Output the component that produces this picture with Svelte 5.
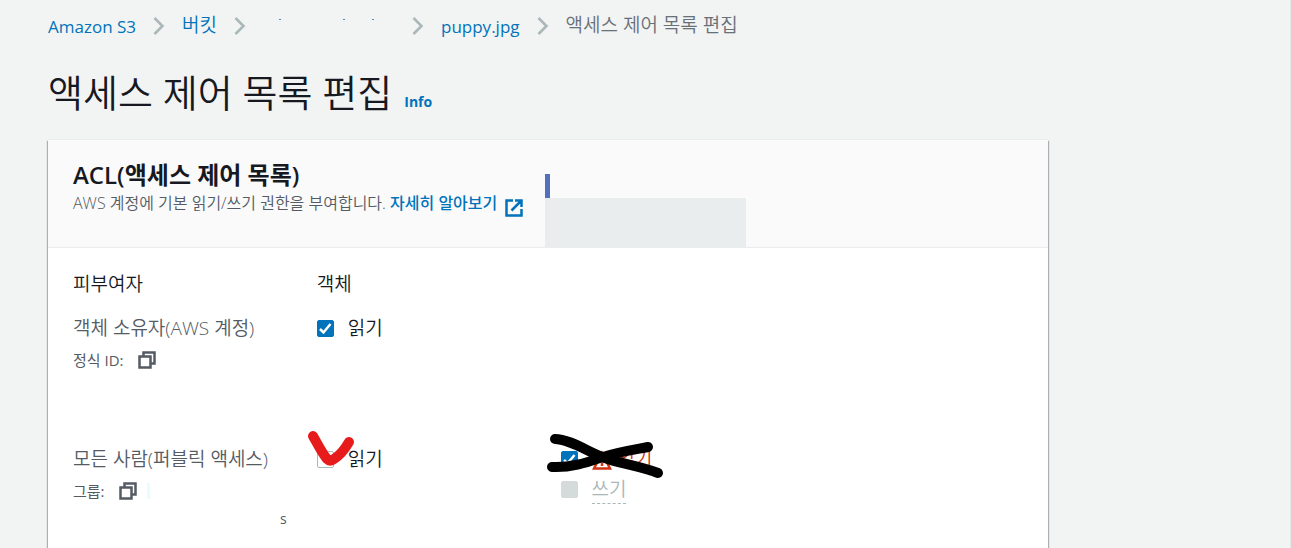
<script lang="ts">
	const title = '액세스 제어 목록 편집';

	let ownerRead = $state(true);
	let publicRead = $state(false);
	let publicAclRead = $state(true);
</script>

{#snippet chevron()}
	<svg class="chevron" viewBox="0 0 12 18" aria-hidden="true">
		<path d="M1.5 1 L9.5 9 L1.5 17" />
	</svg>
{/snippet}

{#snippet tick()}
	<svg class="tick" viewBox="0 0 17 17" aria-hidden="true">
		<path d="M3 9 L6.5 12.5 L13.5 4" />
	</svg>
{/snippet}

{#snippet copyIcon()}
	<svg class="copy-icon" viewBox="0 0 18 18" aria-hidden="true">
		<path d="M1.5 5.5 H12.5 V16.5 H1.5 Z" />
		<path d="M5.5 5 V1.5 H16.5 V12.5 H13" />
	</svg>
{/snippet}

<main>
	<nav aria-label="breadcrumb">
		<a href="#s3">Amazon S3</a>
		{@render chevron()}
		<a href="#buckets">버킷</a>
		{@render chevron()}
		<svg class="hidden-name" viewBox="0 0 132 18" aria-hidden="true">
			<path d="M16 2.5h2M80 2.5h2M109 2.5h2" />
		</svg>
		{@render chevron()}
		<a href="#object">puppy.jpg</a>
		{@render chevron()}
		<span class="current">{title}</span>
	</nav>

	<div class="heading">
		<h1>{title}</h1>
		<a class="info" href="#info">Info</a>
	</div>

	<section class="card">
		<header>
			<h2>ACL(액세스 제어 목록)</h2>
			<p>
				AWS 계정에 기본 읽기/쓰기 권한을 부여합니다.
				<a class="learn-more" href="#learn"
					>자세히 알아보기<svg class="external" viewBox="0 0 18 18" aria-hidden="true">
						<path d="M8 1.5 H1.5 V16.5 H16.5 V10" />
						<path d="M10 1.5 H16.5 V8 M16 2 L6.5 11.5" />
					</svg></a
				>
			</p>
			<div class="mask"></div>
		</header>

		<div class="grid">
			<div class="row head">
				<div>피부여자</div>
				<div>객체</div>
			</div>

			<div class="row owner">
				<div>
					<div class="name">객체 소유자(AWS 계정)</div>
					<div class="detail">
						정식 ID: <button aria-label="복사">{@render copyIcon()}</button>
					</div>
				</div>
				<div>
					<label>
						<span class="box"><input type="checkbox" bind:checked={ownerRead} />{@render tick()}</span>
						읽기
					</label>
				</div>
			</div>

			<div class="row">
				<div>
					<div class="name">모든 사람(퍼블릭 액세스)</div>
					<div class="detail">
						그룹: <button aria-label="복사">{@render copyIcon()}</button>
						<span class="sliver"></span>
					</div>
					<div class="tail">s</div>
				</div>
				<div class="marked">
					<label>
						<span class="box"><input type="checkbox" bind:checked={publicRead} />{@render tick()}</span>
						읽기
					</label>
					<svg class="red-mark" viewBox="0 0 60 50" aria-hidden="true">
						<path d="M11 11 C16 20 20 28 25 34 Q28 37 32 34 Q40 29 47 17" />
					</svg>
				</div>
				<div class="marked">
					<label class="warning">
						<span class="box"><input type="checkbox" bind:checked={publicAclRead} />{@render tick()}</span>
						<span class="warning-text">
							<svg class="triangle" viewBox="0 0 20 22" aria-hidden="true">
								<path d="M10 5 L18 20.5 H2 Z" />
								<path d="M10 10v4M10 15v3" />
							</svg>
							읽기
						</span>
					</label>
					<label class="disabled">
						<span class="box"><input type="checkbox" disabled /></span>
						<span class="dashed">쓰기</span>
					</label>
					<svg class="black-mark" viewBox="0 0 130 60" aria-hidden="true">
						<path d="M14 14 C28 14 46 26 61 32 S99 41 117 48" />
						<path d="M11 42 C31 43 47 37 62 32 S91 25 107 22" />
					</svg>
				</div>
			</div>
		</div>
	</section>
</main>

<style>
	:global(body) {
		background: #f2f3f3;
		color: #16191f;
		font-family: 'Open Sans', 'Noto Sans CJK KR', sans-serif;
		font-size: 17px;
	}

	main {
		box-sizing: border-box;
		min-height: 100vh;
		display: flex;
		flex-direction: column;
		padding: 12px 48px 0;
		border-right: 1px solid #e6e8e8;
	}

	a {
		color: #0073bb;
		text-decoration: none;
	}

	nav {
		display: flex;
		align-items: center;
		gap: 17px;
		height: 28px;
		white-space: nowrap;
	}

	nav a:nth-of-type(2),
	.current {
		font-size: 19px;
		font-weight: 350;
		line-height: 24px;
		padding-bottom: 2px;
	}

	.current {
		color: #687078;
	}

	.chevron {
		flex: none;
		width: 12px;
		height: 18px;
		fill: none;
		stroke: #aab7b8;
		stroke-width: 2.5;
	}

	.hidden-name {
		flex: none;
		width: 132px;
		height: 18px;
		stroke: #5591c0;
	}

	.heading {
		display: flex;
		align-items: baseline;
		gap: 12px;
		margin: 29px 0 25px;
	}

	h1 {
		margin: 0;
		font-size: 38px;
		font-weight: 350;
		line-height: 46px;
	}

	.info {
		font-size: 14px;
		font-weight: 700;
		line-height: 20px;
	}

	.card {
		flex: 1;
		max-width: 1000px;
		background: #fff;
		box-shadow:
			0 -1px 0 0 #eaeded,
			1px 1px 1px 0 rgba(0, 28, 36, 0.3),
			-1px 1px 1px 0 rgba(0, 28, 36, 0.3);
	}

	header {
		position: relative;
		box-sizing: border-box;
		min-height: 108px;
		padding: 20px 25px;
		background: #fafafa;
		border-bottom: 1px solid #eaeded;
	}

	h2 {
		margin: 0;
		font-size: 24px;
		font-weight: 600;
		line-height: 30px;
	}

	p {
		margin: 0;
		color: #545b64;
		font-size: 16px;
		font-weight: 350;
		line-height: 26px;
	}

	.learn-more {
		font-weight: 500;
	}

	.external {
		width: 18px;
		height: 18px;
		margin-left: 8px;
		vertical-align: -8px;
		fill: none;
		stroke: #0073bb;
		stroke-width: 2.5;
	}

	.mask {
		position: absolute;
		left: 497px;
		bottom: -1px;
		width: 201px;
		height: 50px;
		background: #e9eded;
	}

	.mask::before {
		content: '';
		position: absolute;
		left: 0;
		bottom: 100%;
		width: 5px;
		height: 24px;
		background: #5270bd;
	}

	.grid {
		padding: 20px 25px 0;
		font-size: 19px;
		font-weight: 350;
		line-height: 32px;
	}

	.row {
		display: grid;
		grid-template-columns: repeat(4, 1fr);
		gap: 25px;
	}

	.head {
		margin-bottom: 12px;
	}

	.owner {
		min-height: 131px;
	}

	.name,
	.detail,
	.tail {
		color: #545b64;
	}

	.name {
		white-space: nowrap;
	}

	.detail {
		display: flex;
		align-items: center;
		gap: 14px;
		font-size: 15px;
		font-weight: 400;
	}

	.tail {
		padding-left: 207px;
		font-size: 14px;
		font-weight: 400;
		line-height: 24px;
	}

	button {
		display: flex;
		padding: 0;
		border: 0;
		background: none;
	}

	.copy-icon {
		width: 18px;
		height: 18px;
		fill: none;
		stroke: #545b64;
		stroke-width: 2.5;
	}

	.sliver {
		width: 3px;
		height: 16px;
		margin-left: -4px;
		background: #e8fdff;
	}

	label {
		display: flex;
		align-items: center;
		gap: 14px;
	}

	.box {
		position: relative;
		display: flex;
	}

	input {
		appearance: none;
		box-sizing: border-box;
		width: 17px;
		height: 17px;
		margin: 0;
		border: 1px solid #aab7b8;
		border-radius: 2px;
		background: #fff;
	}

	input:checked {
		border-color: #0073bb;
		background: #0073bb;
	}

	input:disabled {
		border-color: #d5dbdb;
		background: #d5dbdb;
	}

	.tick {
		position: absolute;
		inset: 0;
		fill: none;
		stroke: #fff;
		stroke-width: 2.5;
		pointer-events: none;
	}

	.warning-text {
		display: flex;
		align-items: center;
		gap: 6px;
		color: #d13212;
	}

	.triangle {
		width: 20px;
		height: 22px;
		fill: none;
		stroke: #d13212;
		stroke-width: 2.5;
	}

	.disabled {
		color: #aab7b8;
	}

	.dashed {
		border-bottom: 1px dashed #aab7b8;
		line-height: 28px;
	}

	.marked {
		position: relative;
	}

	.red-mark,
	.black-mark {
		position: absolute;
		fill: none;
		stroke-linecap: round;
		stroke-linejoin: round;
		pointer-events: none;
	}

	.red-mark {
		left: -15px;
		top: -18px;
		width: 60px;
		height: 50px;
		stroke: #e71b1b;
		stroke-width: 10;
	}

	.black-mark {
		left: -20px;
		top: -18px;
		width: 130px;
		height: 60px;
		stroke: #000;
		stroke-width: 10;
	}
</style>
